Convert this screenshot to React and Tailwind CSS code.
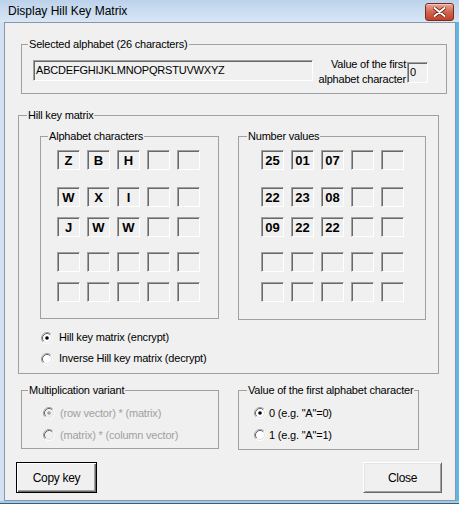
import React from "react";

const sunken =
  "border border-t-[#a0a0a0] border-l-[#a0a0a0] border-r-white border-b-white shadow-[inset_1px_1px_0_#696969]";

function Radio({ checked, disabled }) {
  const fill = disabled ? "#f0f0f0" : "#ffffff";
  const dot = disabled ? "#a0a0a0" : "#000000";
  return (
    <svg width="12" height="12" viewBox="0 0 12 12" className="shrink-0">
      <circle cx="6" cy="6" r="4.5" fill={fill} />
      <path d="M2.11 9.89 A5.5 5.5 0 0 1 9.89 2.11" fill="none" stroke="#a0a0a0" strokeWidth="1" />
      <path d="M2.82 9.18 A4.5 4.5 0 0 1 9.18 2.82" fill="none" stroke="#696969" strokeWidth="1" />
      <path d="M9.89 2.11 A5.5 5.5 0 0 1 2.11 9.89" fill="none" stroke="#ffffff" strokeWidth="1" />
      <path d="M9.18 2.82 A4.5 4.5 0 0 1 2.82 9.18" fill="none" stroke="#e3e3e3" strokeWidth="1" />
      {checked && <circle cx="6" cy="6" r="1.8" fill={dot} />}
    </svg>
  );
}

const alpha = [
  ["Z", "B", "H", "", ""],
  ["W", "X", "I", "", ""],
  ["J", "W", "W", "", ""],
  ["", "", "", "", ""],
  ["", "", "", "", ""],
];
const nums = [
  ["25", "01", "07", "", ""],
  ["22", "23", "08", "", ""],
  ["09", "22", "22", "", ""],
  ["", "", "", "", ""],
  ["", "", "", "", ""],
];
const rowMt = ["mt-[7px]", "mt-[17px]", "mt-[10px]", "mt-[15px]", "mt-[10px]"];

function Grid({ data, pl }) {
  return (
    <div className={`flex flex-col ${pl}`}>
      {data.map((row, i) => (
        <div key={i} className={`flex gap-[7px] ${rowMt[i]}`}>
          {row.map((c, j) => (
            <div
              key={j}
              className={`${sunken} w-[23px] h-[20px] flex items-center justify-center text-[13px] font-bold leading-none tracking-normal`}
            >
              {c}
            </div>
          ))}
        </div>
      ))}
    </div>
  );
}

const legend = "px-[1px] leading-[13px] whitespace-nowrap";

export default function App() {
  return (
    <div className="w-[459px] h-[506px] bg-white text-black text-[11px] leading-[13px] tracking-[-0.2px] font-['Liberation_Sans',Arial,sans-serif]">
      <div className="h-[504px] flex flex-col bg-[#cfdff1]">
        {/* title bar */}
        <div className="h-[22px] flex items-center justify-between pl-[8px] pr-[5px] bg-gradient-to-b from-[#bcd2eb] to-[#d8e6f5]">
          <span className="text-[12px] leading-[14px] tracking-normal">Display Hill Key Matrix</span>
          <div className="mt-[2px] w-[29px] h-[18px] rounded-[3px] border border-[#7a2a1c] bg-gradient-to-b from-[#e9a897] via-[#d0654f] to-[#c3402b] flex items-center justify-center shadow-[inset_0_1px_0_#f3c7bb]">
            <svg width="13" height="10" viewBox="0 0 13 10">
              <path d="M1.5 1 L11.5 9 M11.5 1 L1.5 9" stroke="#6b2418" strokeWidth="3.6" strokeLinecap="round" />
              <path d="M1.5 1 L11.5 9 M11.5 1 L1.5 9" stroke="#ffffff" strokeWidth="2" strokeLinecap="round" />
            </svg>
          </div>
        </div>
        {/* body */}
        <div className="flex h-[479px]">
          <div className="w-[4px] bg-[#d3e2f3]" />
          <div className="w-[452px] border border-[#8796aa] bg-[#f0f0f0] flex flex-col">
            {/* Selected alphabet */}
            <fieldset className="ml-[16px] mt-[15px] w-[426px] h-[56px] border border-[#a0a0a0]">
              <legend className={`ml-[6px] ${legend}`}>Selected alphabet (26 characters)</legend>
              <div className="flex items-start pt-[9px] pl-[11px] pr-[18px]">
                <div className={`${sunken} w-[280px] h-[21px] flex items-center pl-[2px]`}>
                  ABCDEFGHIJKLMNOPQRSTUVWXYZ
                </div>
                <div className="ml-auto mt-[-3px] flex items-center">
                  <div className="text-right leading-[15px] mr-[1px] whitespace-nowrap">
                    Value of the first
                    <br />
                    alphabet character
                  </div>
                  <div className={`${sunken} w-[21px] h-[21px] pl-[2px] pt-[3px]`}>0</div>
                </div>
              </div>
            </fieldset>

            {/* Hill key matrix */}
            <fieldset className="ml-[13px] mt-[15px] w-[421px] h-[265px] border border-[#a0a0a0]">
              <legend className={`ml-[8px] ${legend}`}>Hill key matrix</legend>
              <div className="flex items-start mt-[8px]">
                <fieldset className="ml-[21px] w-[179px] h-[189px] border border-[#a0a0a0]">
                  <legend className={`ml-[7px] ${legend}`}>Alphabet characters</legend>
                  <Grid data={alpha} pl="pl-[16px]" />
                </fieldset>
                <fieldset className="ml-[19px] w-[188px] h-[190px] border border-[#a0a0a0]">
                  <legend className={`ml-[8px] ${legend}`}>Number values</legend>
                  <Grid data={nums} pl="pl-[22px]" />
                </fieldset>
              </div>
              <div className="mt-[7px] ml-[22px] flex flex-col">
                <div className="h-[21px] flex items-center gap-[6px]">
                  <Radio checked />
                  <span>Hill key matrix (encrypt)</span>
                </div>
                <div className="h-[21px] flex items-center gap-[6px]">
                  <Radio />
                  <span>Inverse Hill key matrix (decrypt)</span>
                </div>
              </div>
            </fieldset>

            {/* bottom groups */}
            <div className="flex items-start mt-[10px]">
              <fieldset className="ml-[16px] w-[198px] h-[65px] border border-[#a0a0a0]">
                <legend className={`ml-[6px] ${legend}`}>Multiplication variant</legend>
                <div className="pt-[5px] pl-[21px] flex flex-col text-[#a0a0a0]">
                  <div className="h-[22px] flex items-center gap-[5px]">
                    <Radio checked disabled />
                    <span>(row vector) * (matrix)</span>
                  </div>
                  <div className="h-[22px] flex items-center gap-[5px]">
                    <Radio disabled />
                    <span>(matrix) * (column vector)</span>
                  </div>
                </div>
              </fieldset>
              <fieldset className="ml-[19px] w-[181px] h-[66px] border border-[#a0a0a0]">
                <legend className={`ml-[8px] ${legend}`}>Value of the first alphabet character</legend>
                <div className="pt-[5px] pl-[15px] flex flex-col">
                  <div className="h-[22px] flex items-center gap-[3px]">
                    <Radio checked />
                    <span>0 (e.g. "A"=0)</span>
                  </div>
                  <div className="h-[22px] flex items-center gap-[3px]">
                    <Radio />
                    <span>1 (e.g. "A"=1)</span>
                  </div>
                </div>
              </fieldset>
            </div>

            {/* buttons */}
            <div className="flex mt-[12px] pl-[11px] pr-[13px]">
              <button className="w-[81px] h-[31px] border border-black bg-[#f0f0f0] shadow-[inset_1px_1px_0_#fff,inset_-1px_-1px_0_#696969,inset_-2px_-2px_0_#a0a0a0] text-[12px] leading-none tracking-[-0.3px]">
                Copy key
              </button>
              <button className="ml-auto w-[79px] h-[31px] border border-t-white border-l-white border-r-[#696969] border-b-[#696969] bg-[#f0f0f0] shadow-[inset_1px_1px_0_#e3e3e3,inset_-1px_-1px_0_#a0a0a0] text-[12px] leading-none tracking-[-0.3px]">
                Close
              </button>
            </div>
          </div>
          <div className="w-[3px] bg-[#5fb7e4]" />
        </div>
        <div className="h-[2px] bg-[#9ccdec]" />
        <div className="h-[1px] bg-[#4a5a6a]" />
      </div>
    </div>
  );
}
